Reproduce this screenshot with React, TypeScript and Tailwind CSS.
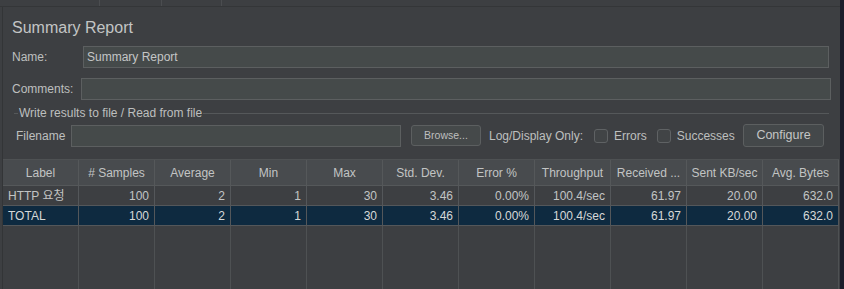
import React from "react";

const font = { fontFamily: '"Liberation Sans", Arial, "Noto Sans CJK KR", sans-serif' };

const columns = [
  "Label",
  "# Samples",
  "Average",
  "Min",
  "Max",
  "Std. Dev.",
  "Error %",
  "Throughput",
  "Received ...",
  "Sent KB/sec",
  "Avg. Bytes",
];

const rows = [
  ["HTTP 요청", "100", "2", "1", "30", "3.46", "0.00%", "100.4/sec", "61.97", "20.00", "632.0"],
  ["TOTAL", "100", "2", "1", "30", "3.46", "0.00%", "100.4/sec", "61.97", "20.00", "632.0"],
];

function TextField({ value = "", className = "" }: { value?: string; className?: string }) {
  return (
    <div
      className={`flex h-[22px] items-center border border-[#5c5f60] bg-[#454a4a] px-[3px] text-[12px] text-[#c4c6c6] ${className}`}
    >
      {value}
    </div>
  );
}

function Checkbox({ label }: { label: string }) {
  return (
    <div className="flex items-center gap-[6px]">
      <span className="h-[14px] w-[14px] rounded-[3px] border border-[#5f6264] bg-[#414446]" />
      <span className="text-[12px] text-[#bdbfbf]">{label}</span>
    </div>
  );
}

export default function App() {
  return (
    <div className="flex h-[289px] w-[844px] overflow-hidden bg-[#3d3f42]" style={font}>
      <div className="flex min-w-0 flex-1 flex-col">
        {/* tab strip */}
        <div className="flex h-[7px] shrink-0 border-b border-[#343638]">
          <div className="w-[100px] border-r border-[#4b4d50]" />
          <div className="w-[62px] border-r border-[#4b4d50]" />
          <div className="w-[60px] border-r border-[#4b4d50]" />
        </div>

        <div className="ml-[2px] flex min-h-0 flex-1 flex-col border-l border-[#333537]">
          <div className="pl-[9px] pt-[12px] text-[16px] leading-[18px] text-[#c3c5c5]">Summary Report</div>

          <div className="mt-[9px] flex items-center pl-[9px] pr-[11px]">
            <span className="w-[71px] text-[12px] text-[#bdbfbf]">Name:</span>
            <TextField value="Summary Report" className="flex-1" />
          </div>

          <div className="mt-[10px] flex items-center pl-[9px] pr-[9px]">
            <span className="w-[69px] text-[12px] text-[#bdbfbf]">Comments:</span>
            <TextField className="flex-1" />
          </div>

          {/* titled border */}
          <div className="mt-[6px] flex items-center pl-[11px] pr-[11px]">
            <span className="h-px w-[4px] bg-[#55585a]" />
            <span className="px-[1px] text-[12px] leading-[14px] text-[#bdbfbf]">Write results to file / Read from file</span>
            <span className="h-px flex-1 bg-[#55585a]" />
          </div>

          <div className="mt-[4px] flex items-center pl-[13px] pr-[16px]">
            <span className="w-[55px] text-[12px] text-[#bdbfbf]">Filename</span>
            <TextField className="w-[330px]" />
            <button className="ml-[10px] h-[21px] w-[70px] rounded-[3px] border border-[#5c5f60] bg-[#45494a] text-[10.5px] text-[#bdbfbf]">
              Browse...
            </button>
            <span className="ml-[8px] text-[12px] text-[#bdbfbf]">Log/Display Only:</span>
            <div className="ml-[11px]">
              <Checkbox label="Errors" />
            </div>
            <div className="ml-[10px]">
              <Checkbox label="Successes" />
            </div>
            <button className="ml-auto h-[23px] w-[81px] rounded-[3px] border border-[#5c5f60] bg-[#44484a] text-[12.5px] text-[#c4c6c6]">
              Configure
            </button>
          </div>

          {/* results table */}
          <div className="mt-[12px] flex min-h-0 w-[836px] flex-1 flex-col border-t border-[#4e5153]">
            <div className="grid h-[26px] shrink-0 grid-cols-11 border-b border-[#55585a] bg-[#484b4e]">
              {columns.map((c) => (
                <div
                  key={c}
                  className="flex items-center justify-center border-r border-[#55585a] text-[12px] text-[#c2c4c4]"
                >
                  {c}
                </div>
              ))}
            </div>
            {rows.map((r, i) => (
              <div
                key={i}
                className={`grid h-[20px] shrink-0 grid-cols-11 border-b border-[#54575a] ${
                  i === 1 ? "bg-[#0e2a40] text-[#d6d8d8]" : "text-[#c2c4c4]"
                }`}
              >
                {r.map((v, j) => (
                  <div
                    key={j}
                    className={`flex items-center border-r border-[#54575a] px-[5px] text-[12px] ${
                      j === 0 ? "justify-start" : "justify-end"
                    }`}
                  >
                    {v}
                  </div>
                ))}
              </div>
            ))}
            <div className="grid flex-1 grid-cols-11">
              {columns.map((c) => (
                <div key={c} className="border-r border-[#4e5153]" />
              ))}
            </div>
          </div>
        </div>
      </div>
      <div className="w-[4px] shrink-0 bg-[#1c1d2b]" />
    </div>
  );
}
